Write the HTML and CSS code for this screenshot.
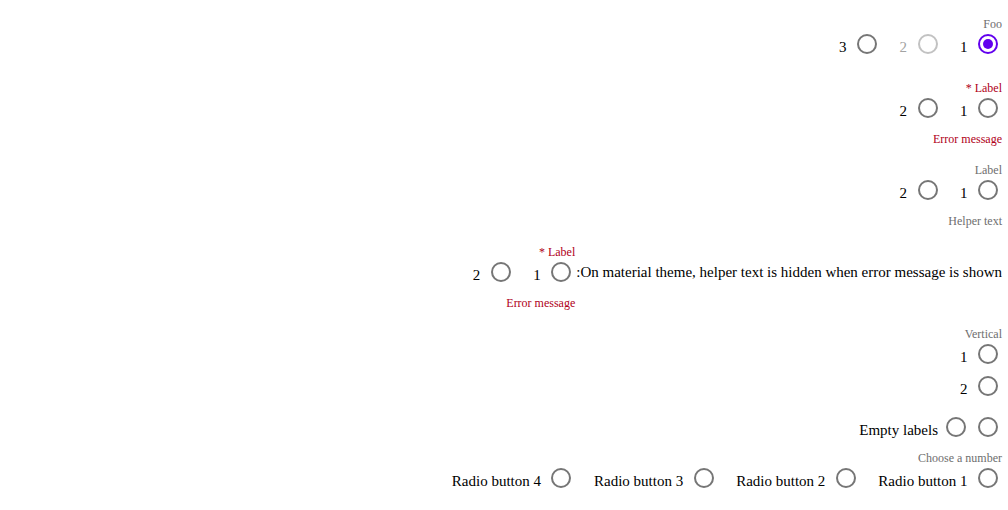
FILE: index.html
```html
<!DOCTYPE html>
<html lang="en" dir="rtl">
<head>
<meta charset="utf-8">
<title>Radio buttons</title>
<link rel="stylesheet" href="styles.css">
</head>
<body>
<main class="page">

  <div class="group group-loose">
    <div class="group-label">Foo</div>
    <div class="radios">
      <label class="radio"><span class="dot dot-checked"></span><span class="radio-text">1</span></label>
      <label class="radio radio-disabled"><span class="dot"></span><span class="radio-text">2</span></label>
      <label class="radio"><span class="dot"></span><span class="radio-text">3</span></label>
    </div>
  </div>

  <div class="group">
    <div class="group-label label-required">Label *</div>
    <div class="radios">
      <label class="radio"><span class="dot"></span><span class="radio-text">1</span></label>
      <label class="radio"><span class="dot"></span><span class="radio-text">2</span></label>
    </div>
    <div class="helper helper-error">Error message</div>
  </div>

  <div class="group">
    <div class="group-label">Label</div>
    <div class="radios">
      <label class="radio"><span class="dot"></span><span class="radio-text">1</span></label>
      <label class="radio"><span class="dot"></span><span class="radio-text">2</span></label>
    </div>
    <div class="helper">Helper text</div>
  </div>

  <div class="inline-row inline-row-note group">
    <span class="note">On material theme, helper text is hidden when error message is shown:</span>
    <div class="group-inline">
      <div class="group-label label-required">Label *</div>
      <div class="radios">
        <label class="radio"><span class="dot"></span><span class="radio-text">1</span></label>
        <label class="radio"><span class="dot"></span><span class="radio-text">2</span></label>
      </div>
      <div class="helper helper-error">Error message</div>
    </div>
  </div>

  <div class="group group-vertical-block">
    <div class="group-label">Vertical</div>
    <div class="radios radios-vertical">
      <label class="radio"><span class="dot"></span><span class="radio-text">1</span></label>
      <label class="radio"><span class="dot"></span><span class="radio-text">2</span></label>
    </div>
  </div>

  <div class="inline-row inline-row-empty group-empty">
    <div class="radios">
      <label class="radio"><span class="dot"></span></label>
      <label class="radio"><span class="dot"></span></label>
    </div>
    <span class="side-text">Empty labels</span>
  </div>

  <div class="group">
    <div class="group-label">Choose a number</div>
    <div class="radios">
      <label class="radio"><span class="dot"></span><span class="radio-text">Radio button 1</span></label>
      <label class="radio"><span class="dot"></span><span class="radio-text">Radio button 2</span></label>
      <label class="radio"><span class="dot"></span><span class="radio-text">Radio button 3</span></label>
      <label class="radio"><span class="dot"></span><span class="radio-text">Radio button 4</span></label>
    </div>
  </div>

</main>
</body>
</html>
```

FILE: styles.css
```css
html {
  direction: rtl;
}

body {
  margin: 0;
  background: #ffffff;
  color: #000000;
  font-family: "Liberation Serif", "Times New Roman", serif;
  font-size: 15px;
}

.page {
  padding: 17px 6px 0 8px;
}

.group {
  margin-bottom: 17px;
}

.group-loose {
  margin-bottom: 24px;
}

.group-vertical-block {
  margin-bottom: 15px;
}

.group-empty {
  margin-bottom: 11px;
}

.group-label,
.helper {
  font-size: 12px;
  line-height: 14px;
  color: #6e6e6e;
  white-space: nowrap;
}

.helper {
  margin-top: 11px;
}

.label-required,
.helper-error {
  color: #b00020;
}

.radios {
  display: flex;
  gap: 12px;
  padding: 3px 4px;
}

.radios-vertical {
  flex-direction: column;
  align-items: flex-start;
  gap: 12px;
}

.radio {
  display: flex;
  align-items: flex-start;
  cursor: pointer;
}

.dot {
  flex: none;
  box-sizing: border-box;
  width: 20px;
  height: 20px;
  border: 2px solid #767676;
  border-radius: 50%;
  display: flex;
  align-items: center;
  justify-content: center;
}

.dot-checked {
  border-color: #6200ee;
}

.dot-checked::after {
  content: "";
  width: 10px;
  height: 10px;
  border-radius: 50%;
  background: #6200ee;
}

.radio-text {
  margin: 0 10.5px;
  padding-top: 6px;
  line-height: 14px;
  white-space: nowrap;
}

.radio-disabled .dot {
  border-color: #c2c2c2;
}

.radio-disabled .radio-text {
  color: #a3a3a3;
}

.inline-row {
  display: flex;
  align-items: flex-start;
  gap: 3px;
}

.inline-row-note {
  gap: 1px;
}

.inline-row-empty {
  gap: 4px;
}

.note {
  padding-top: 20px;
  line-height: 14px;
  white-space: nowrap;
}

.side-text {
  padding-top: 9px;
  line-height: 14px;
  white-space: nowrap;
}
```
